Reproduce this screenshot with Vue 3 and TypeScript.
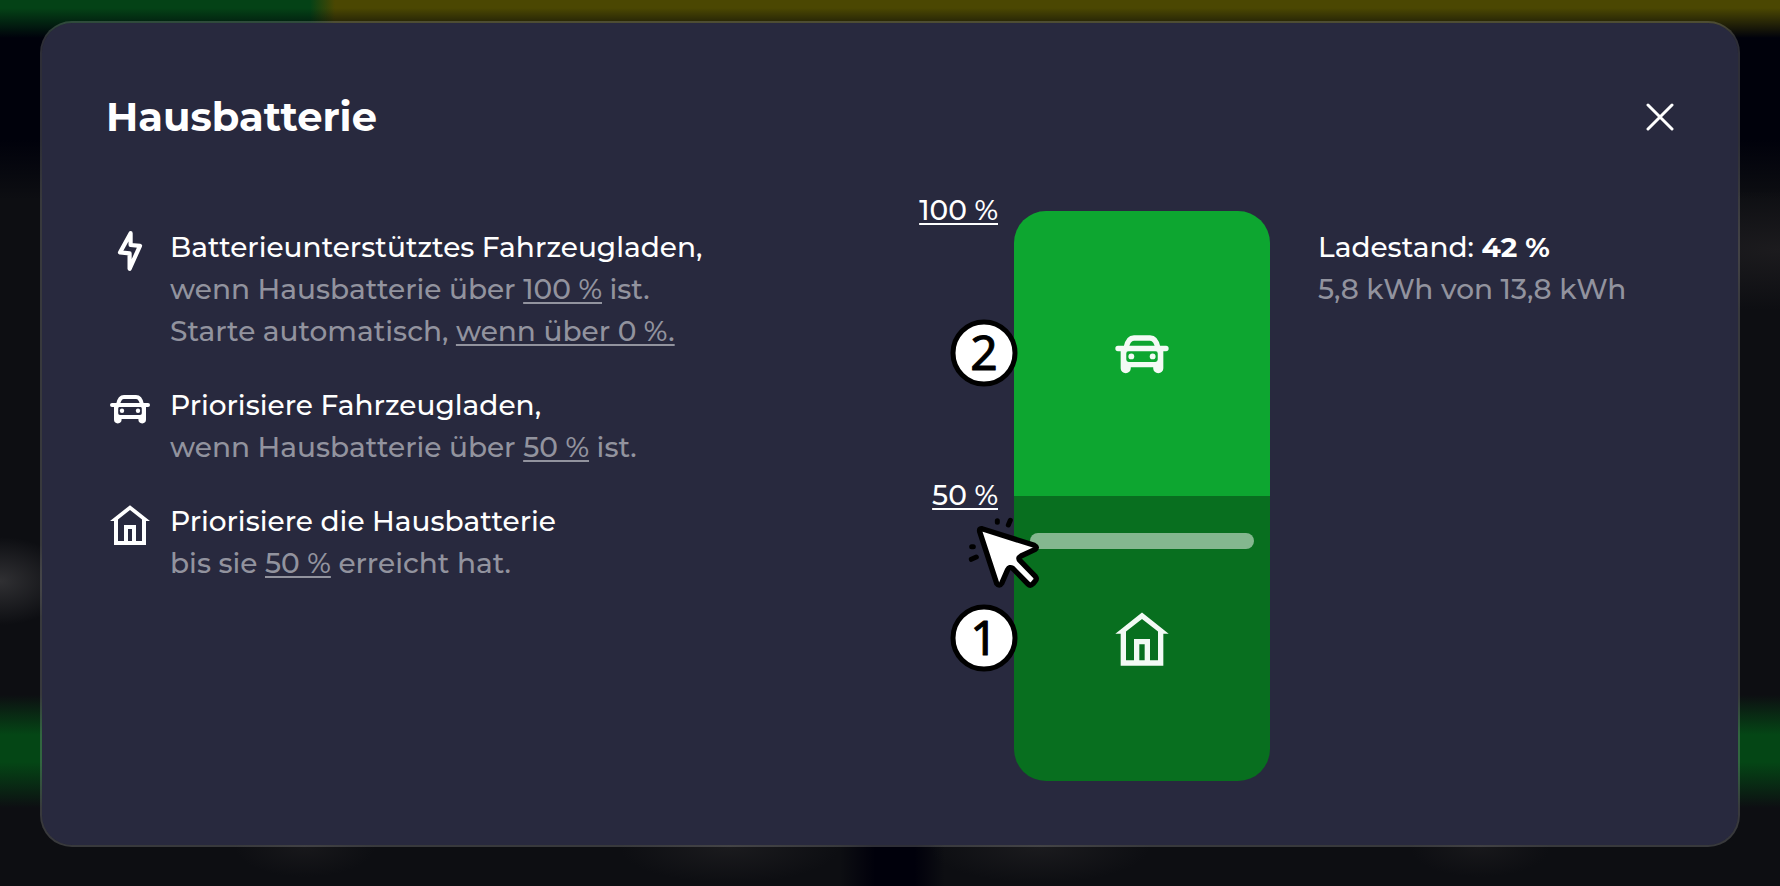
<script setup lang="ts">
import { computed, ref } from 'vue'

type IconName = 'bolt' | 'car' | 'home'
interface TextPart { text: string; link?: boolean }
interface Rule { icon: IconName; title: string; lines: TextPart[][] }

const open = ref(true)
const bufferStart = 100
const priority = 50
const soc = 42

const rules: Rule[] = [
  {
    icon: 'bolt',
    title: 'Batterieunterstütztes Fahrzeugladen,',
    lines: [
      [{ text: 'wenn Hausbatterie über ' }, { text: `${bufferStart} %`, link: true }, { text: ' ist.' }],
      [{ text: 'Starte automatisch, ' }, { text: 'wenn über 0 %.', link: true }],
    ],
  },
  {
    icon: 'car',
    title: 'Priorisiere Fahrzeugladen,',
    lines: [[{ text: 'wenn Hausbatterie über ' }, { text: `${priority} %`, link: true }, { text: ' ist.' }]],
  },
  {
    icon: 'home',
    title: 'Priorisiere die Hausbatterie',
    lines: [[{ text: 'bis sie ' }, { text: `${priority} %`, link: true }, { text: ' erreicht hat.' }]],
  },
]

const zoneStyle = computed(() => ({ height: `${priority}%` }))
const splitStyle = computed(() => ({ top: `${100 - priority}%` }))
const socStyle = computed(() => ({ top: `${100 - soc}%` }))
</script>

<template>
  <div class="page">
    <svg class="symbols" aria-hidden="true">
      <symbol id="bolt" viewBox="0 0 24 24">
        <path d="M12.3 3.1 7 12.7 11.8 13.2V20.9L17 9.4 12.3 9Z" fill="none" stroke="currentColor" stroke-width="2.1" stroke-linejoin="round" />
      </symbol>
      <symbol id="car" viewBox="0 0 24 24">
        <path d="M6 9.8C6.5 7.2 7.4 6 9 6H15C16.6 6 17.5 7.2 18 9.8M3 9.95H21" fill="none" stroke="currentColor" stroke-width="2" stroke-linecap="round" />
        <path d="M4 10H20V17.3A1.9 1.9 0 0 1 16.2 17.3V17H7.8V17.3A1.9 1.9 0 0 1 4 17.3ZM7 10.9Q6.1 10.9 6.1 11.8V14.1Q6.1 15 7 15H17Q17.9 15 17.9 14.1V11.8Q17.9 10.9 17 10.9Z" fill="currentColor" fill-rule="evenodd" />
        <circle cx="8" cy="12.9" r="1.1" fill="currentColor" />
        <circle cx="16" cy="12.9" r="1.1" fill="currentColor" />
      </symbol>
      <symbol id="home" viewBox="0 0 24 24">
        <path d="M2 10 12 2.1 22 10H20V22H4V10ZM6 9.2V20H9V12H15V20H18V9.2L12 4.5ZM11 14V20H13V14Z" fill="currentColor" fill-rule="evenodd" />
      </symbol>
    </svg>

    <section v-if="open" class="modal" role="dialog" aria-labelledby="dialog-title">
      <header class="header">
        <h1 id="dialog-title">Hausbatterie</h1>
        <button class="close" type="button" aria-label="Schließen" @click="open = false">
          <svg viewBox="0 0 28 28" aria-hidden="true"><path d="M2 2 26 26M26 2 2 26" /></svg>
        </button>
      </header>

      <div class="content">
        <ul class="rules">
          <li v-for="rule in rules" :key="rule.title" class="rule">
            <svg class="icon" aria-hidden="true"><use :href="`#${rule.icon}`" /></svg>
            <div>
              <p class="strong">{{ rule.title }}</p>
              <p v-for="(line, i) in rule.lines" :key="i" class="muted"><template v-for="(part, j) in line" :key="j"><a v-if="part.link" href="#">{{ part.text }}</a><template v-else>{{ part.text }}</template></template></p>
            </div>
          </li>
        </ul>

        <div class="battery">
          <div class="cells">
            <div class="cell upper"><svg class="cell-icon" aria-hidden="true"><use href="#car" /></svg></div>
            <div class="cell lower" :style="zoneStyle"><svg class="cell-icon" aria-hidden="true"><use href="#home" /></svg></div>
          </div>
          <div class="soc" :style="socStyle"></div>
          <a class="limit top-limit" href="#">{{ bufferStart }} %</a>
          <a class="limit" href="#" :style="splitStyle">{{ priority }} %</a>
          <svg class="badge badge-upper" viewBox="0 0 68 68" aria-hidden="true">
            <circle cx="34" cy="34" r="31" /><text x="34" y="51">2</text>
          </svg>
          <svg class="badge badge-lower" viewBox="0 0 68 68" aria-hidden="true">
            <circle cx="34" cy="34" r="31" /><text x="34" y="51">1</text>
          </svg>
          <svg class="pointer" viewBox="195 165 231 231" aria-hidden="true">
            <path class="arrow" d="M246 206 403 256Q415 262 404 269L363 288Q352 294 360 302L406 349Q412 357 405 364L399 371Q391 379 384 372L338 325Q328 319 323 329L305 370Q298 381 290 370L239 215Q237 204 246 206Z" />
            <path class="spark" d="M292 182V187M331 181 325 195M215 260H220M214 298 229 291" />
          </svg>
        </div>

        <div class="status">
          <p class="strong">Ladestand: <b>{{ soc }} %</b></p>
          <p class="muted">5,8 kWh von 13,8 kWh</p>
        </div>
      </div>
    </section>
  </div>
</template>

<style>
body {
  margin: 0;
  background: #0d0e12;
}
</style>

<style scoped>
.page {
  box-sizing: border-box;
  min-height: 100vh;
  padding: 21px 40px 39px;
  font-family: Montserrat, Inter, "Open Sans", sans-serif;
  font-size: 28px;
  font-weight: 500;
  line-height: 42px;
  color: #fff;
  background:
    radial-gradient(ellipse 70px 44px at 0 581px, #303033, transparent),
    radial-gradient(ellipse 220px 60px at 100% 250px, #1c1b1e, transparent),
    radial-gradient(ellipse 70px 30px at 305px 847px, #18181b, transparent),
    radial-gradient(ellipse 110px 36px at 730px 847px, #1b1b1e, transparent),
    radial-gradient(ellipse 110px 36px at 1040px 847px, #1b1b1e, transparent),
    radial-gradient(ellipse 70px 30px at 1480px 847px, #18181b, transparent),
    linear-gradient(90deg, transparent 840px, #00000b 875px, #00000b 915px, transparent 945px) 0 100% / 100% 60px no-repeat,
    linear-gradient(transparent 0 8px, #00010b 38px, #00010b 140px, transparent 200px) no-repeat,
    linear-gradient(90deg, #044216 310px, #4b4702 335px) 0 0 / 100% 38px no-repeat,
    linear-gradient(#0d0e12 695px, #044615 735px, #044615 762px, #0d0e12 808px);
}

.symbols {
  position: absolute;
  width: 0;
  height: 0;
}

.modal {
  padding: 64px;
  background: #28293e;
  background-clip: padding-box;
  border: 2px solid rgb(255 255 255 / 18%);
  border-radius: 32px;
}

.header {
  display: flex;
  align-items: center;
  justify-content: space-between;
  margin-bottom: 64px;
}

h1 {
  margin: 0;
  font-size: 40px;
  font-weight: 700;
  line-height: 60px;
}

.close {
  display: flex;
  padding: 0;
  background: none;
  border: 0;
  cursor: pointer;
}

.close svg {
  width: 28px;
  height: 28px;
  fill: none;
  stroke: #fff;
  stroke-width: 3;
  stroke-linecap: round;
}

.content {
  display: grid;
  grid-template-columns: minmax(0, 1fr) 256px 404px;
}

.rules {
  display: flex;
  flex-direction: column;
  gap: 32px;
  margin: 0;
  padding: 15px 0 0;
  list-style: none;
}

.rule {
  display: flex;
  gap: 16px;
}

.icon {
  flex: none;
  width: 48px;
  height: 48px;
  margin-top: 1px;
}

p {
  margin: 0;
}

.muted {
  color: #92939e;
}

b {
  font-weight: 700;
}

a {
  color: inherit;
  text-decoration-thickness: 2px;
  text-underline-offset: 3px;
  text-decoration-skip-ink: none;
}

.battery {
  position: relative;
  height: 570px;
}

.cells {
  display: flex;
  flex-direction: column;
  height: 100%;
  overflow: hidden;
  border-radius: 32px;
}

.cell {
  display: flex;
  align-items: center;
  justify-content: center;
}

.upper {
  flex: 1;
  background: #0da630;
}

.lower {
  background: #086f1f;
}

.cell-icon {
  width: 64px;
  height: 64px;
  color: #f3faf5;
}

.soc {
  position: absolute;
  right: 16px;
  left: 16px;
  height: 16px;
  margin-top: -9px;
  background: rgb(255 255 255 / 50%);
  border-radius: 8px;
}

.limit {
  position: absolute;
  right: 100%;
  margin: -22px 16px 0 0;
  white-space: nowrap;
}

.top-limit {
  top: 0;
}

.badge {
  position: absolute;
  left: -64px;
  width: 68px;
  height: 68px;
  margin-top: -35px;
}

.badge-upper {
  top: 25%;
}

.badge-lower {
  top: 75%;
}

.badge circle {
  fill: #fff;
  stroke: #000;
  stroke-width: 5;
}

.badge text {
  font-family: "Noto Sans", sans-serif;
  font-size: 48px;
  font-weight: 400;
  text-anchor: middle;
  stroke: #000;
  stroke-width: 1;
  stroke-linejoin: round;
}

.pointer {
  position: absolute;
  top: 304px;
  left: -49px;
  width: 77px;
  height: 77px;
}

.arrow {
  fill: #fff;
  stroke: #000;
  stroke-width: 16;
  stroke-linejoin: round;
}

.spark {
  fill: none;
  stroke: #000;
  stroke-width: 15;
  stroke-linecap: round;
}

.status {
  padding: 15px 0 0 48px;
}
</style>
